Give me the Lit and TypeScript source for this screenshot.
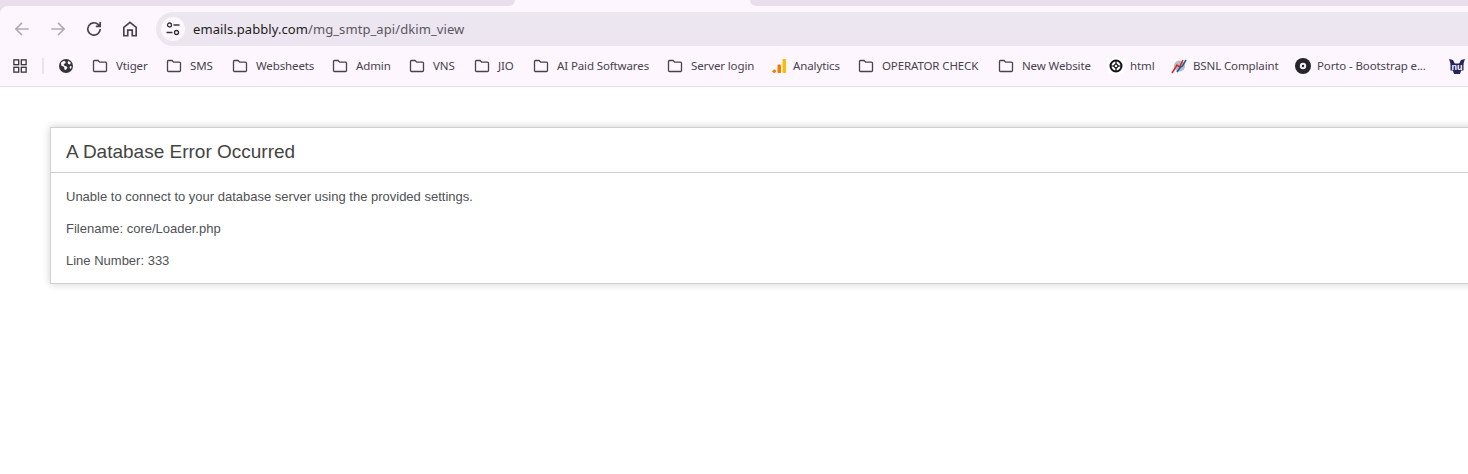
import { LitElement, html, css, svg } from "lit";
import { customElement } from "lit/decorators.js";

type Mark = "folder" | "globe" | "analytics" | "codepen" | "bsnl" | "porto" | "nu";

interface Bookmark {
  label: string;
  icon: Mark;
  left: number; // measured from the reference bar
}

const bookmarks: Bookmark[] = [
  { label: "Vtiger", icon: "folder", left: 92 },
  { label: "SMS", icon: "folder", left: 166 },
  { label: "Websheets", icon: "folder", left: 232 },
  { label: "Admin", icon: "folder", left: 332 },
  { label: "VNS", icon: "folder", left: 409 },
  { label: "JIO", icon: "folder", left: 474 },
  { label: "AI Paid Softwares", icon: "folder", left: 533 },
  { label: "Server login", icon: "folder", left: 667 },
  { label: "Analytics", icon: "analytics", left: 771 },
  { label: "OPERATOR CHECK", icon: "folder", left: 858 },
  { label: "New Website", icon: "folder", left: 998 },
  { label: "html", icon: "codepen", left: 1108 },
  { label: "BSNL Complaint", icon: "bsnl", left: 1171 },
  { label: "Porto - Bootstrap e...", icon: "porto", left: 1295 },
];

const icons: Record<Mark, unknown> = {
  folder: svg`<path d="M1.500 3.500a1 1 0 0 1 1-1h3.600l1.600 1.700h5.800a1 1 0 0 1 1 1v7.300a1 1 0 0 1-1 1H2.500a1 1 0 0 1-1-1z" fill="none" stroke="#47434d" stroke-width="1.300"/>`,
  globe: svg`<circle cx="8" cy="8" r="7" fill="#36343a"/><path d="M3 4.500l3-1.800 1.800 1.200-.6 1.700-1.700.5.900 1.700 2 .4 1 1.500-1.600 2.300-1.400-.6-.3-2.400L3.200 7.500zM10.500 2.800l2.300 2-.6 1.800-2-.5-.6-1.600zM12 8l1.800.5-.9 2.500-1.300-1z" fill="#fdf6fe"/>`,
  analytics: svg`<rect x="1.500" y="11.500" width="3.500" height="3.500" rx="1.700" fill="#f57c00"/><rect x="6.500" y="6.500" width="3.500" height="8.500" rx=".8" fill="#f57c00"/><rect x="11.500" y="1" width="3.500" height="14" rx=".8" fill="#fbbc04"/>`,
  codepen: svg`<rect width="16" height="16" fill="#fff"/><circle cx="8" cy="8" r="5.500" fill="none" stroke="#111" stroke-width="2"/><path d="M8 5.500L10.500 8 8 10.500 5.500 8zM8 2v3.500M8 10.500V14M2 8h3.500M10.500 8H14" fill="none" stroke="#111" stroke-width="1.200"/>`,
  bsnl: svg`<circle cx="8.500" cy="8" r="5.500" fill="#b6bcc2"/><path d="M1 15l5-8 2.500 2L12 2" fill="none" stroke="#e2231a" stroke-width="1.500"/><path d="M6 14l3.500-5 2-1L15 2" fill="none" stroke="#0b5fa5" stroke-width="1.500"/>`,
  porto: svg`<circle cx="8" cy="8" r="8" fill="#26262a"/><circle cx="8" cy="8" r="3.200" fill="#f4f0f4"/><circle cx="8" cy="8" r="1.200" fill="#26262a"/>`,
  nu: svg`<path d="M0 1l4 1 4 8 4-8 4-1-5 15H5z" fill="#26235e"/><rect x="1.500" y="5.500" width="13" height="7" fill="#26235e"/><text x="8" y="11.500" text-anchor="middle" font-family="Liberation Sans" font-size="9" font-weight="700" fill="#fff">nu</text>`,
};

@customElement("app-root")
export class AppRoot extends LitElement {
  static styles = css`
    :host {
      display: block;
      height: 474px;
      overflow: hidden;
      background: #fff;
    }

    .tabs {
      display: flex;
      height: 6px;
      background: #fdf6fe;
    }

    .tabs div {
      background: #e8deec;
    }

    .tabs .before {
      width: 515px;
      border-radius: 0 0 7px 0;
    }

    .tabs .after {
      flex: 1;
      margin-left: 235px;
      border-radius: 0 0 0 7px;
    }

    .chrome {
      background: #e8deec;
    }

    .toolbar {
      display: flex;
      align-items: center;
      box-sizing: border-box;
      height: 40px;
      padding-top: 6px;
      background: #fdf6fe;
      border-radius: 8px 0 0 0;
    }

    .nav {
      width: 36px;
      display: flex;
      justify-content: center;
      flex: none;
    }

    .nav svg {
      width: 18px;
      height: 18px;
      fill: none;
      stroke: #47434d;
      stroke-width: 1.500;
    }

    .nav.off svg {
      stroke: #b0acb5;
    }

    .omnibox {
      flex: 1;
      height: 34px;
      margin-left: 8px;
      border-radius: 17px 0 0 17px;
      background: #ece6f0;
      display: flex;
      align-items: center;
      font: 13px "Noto Sans", sans-serif;
      letter-spacing: 0.08px;
      color: #5a5660;
      overflow: hidden;
    }

    .site {
      width: 24px;
      height: 24px;
      margin: 0 8px 0 5px;
      border-radius: 50%;
      background: #fdf8fe;
      display: flex;
      align-items: center;
      justify-content: center;
    }

    .site svg {
      width: 16px;
      height: 16px;
      fill: none;
      stroke: #36343a;
      stroke-width: 1.300;
    }

    .host {
      color: #1e1c22;
    }

    .bookmarks {
      position: relative;
      height: 40px;
      background: #fdf6fe;
      border-bottom: 1px solid #e6e1e8;
      font: 11.500px "Noto Sans", sans-serif;
      letter-spacing: -0.12px;
      color: #47434d;
    }

    /* bookmark slots are placed at the reference offsets */
    .apps {
      position: absolute;
      left: 13px;
      top: 13px;
      width: 14px;
      height: 14px;
      fill: none;
      stroke: #36343a;
      stroke-width: 1.500;
    }

    .divider {
      position: absolute;
      left: 42px;
      top: 12px;
      width: 2px;
      height: 16px;
      background: #ece0f6;
    }

    .item {
      position: absolute;
      top: 0;
      height: 40px;
      display: flex;
      align-items: center;
      gap: 6px;
      white-space: nowrap;
    }

    .item.folder {
      gap: 8px;
    }

    .item span {
      margin-bottom: 2px;
    }

    .item svg {
      width: 16px;
      height: 16px;
      flex: none;
      display: block;
    }

    main {
      padding: 40px 0 0 50px;
    }

    .card {
      width: 1500px;
      border: 1px solid #d0d0d0;
      box-shadow: 0 0 8px #d0d0d0;
      background: #fff;
      font: 13px/16px "Liberation Sans", Arial, sans-serif;
      color: #4f5155;
    }

    h1 {
      margin: 0;
      padding: 14px 15px 10px;
      border-bottom: 1px solid #d0d0d0;
      font-size: 19px;
      line-height: 20px;
      font-weight: normal;
      color: #444;
    }

    .body {
      padding: 16px 15px 14px;
    }

    p {
      margin: 0 0 16px;
    }

    p:last-child {
      margin-bottom: 0;
    }
  `;

  render() {
    return html`
      <div class="tabs"><div class="before"></div><div class="after"></div></div>
      <div class="chrome">
        <div class="toolbar">
          <div class="nav off" style="margin-left:4px">
            <svg viewBox="0 0 16 16"><path d="M14 8H2.500M8 2.500L2.500 8 8 13.500" /></svg>
          </div>
          <div class="nav off">
            <svg viewBox="0 0 16 16"><path d="M2 8h11.500M8 2.500L13.500 8 8 13.500" /></svg>
          </div>
          <div class="nav">
            <svg viewBox="0 0 16 16"><path d="M13.500 8a5.500 5.500 0 1 1-1.600-3.900L13.500 5.700M13.500 1.800v3.900H9.600" /></svg>
          </div>
          <div class="nav">
            <svg viewBox="0 0 16 16"><path d="M2.500 14V6.500L8 2l5.500 4.500V14h-3.500V9H6v5z" /></svg>
          </div>
          <div class="omnibox">
            <span class="site">
              <svg viewBox="0 0 16 16">
                <circle cx="4.500" cy="4" r="2" />
                <path d="M8.500 4h6M1.500 11.500h6" />
                <circle cx="11.500" cy="11.500" r="2" />
              </svg>
            </span>
            <span><span class="host">emails.pabbly.com</span>/mg_smtp_api/dkim_view</span>
          </div>
        </div>
      </div>
      <div class="bookmarks">
        <svg class="apps" viewBox="0 0 16 16">
          <rect x="1" y="1" width="5.500" height="5.500" />
          <rect x="9.500" y="1" width="5.500" height="5.500" />
          <rect x="1" y="9.500" width="5.500" height="5.500" />
          <rect x="9.500" y="9.500" width="5.500" height="5.500" />
        </svg>
        <div class="divider"></div>
        <div class="item" style="left:58px">
          <svg viewBox="0 0 16 16">${icons.globe}</svg>
        </div>
        ${bookmarks.map(
          (b) => html`
            <div class="item ${b.icon === "folder" ? "folder" : ""}" style="left:${b.left}px">
              <svg viewBox="0 0 16 16">${icons[b.icon]}</svg>
              <span>${b.label}</span>
            </div>
          `,
        )}
        <div class="item" style="left:1449px">
          <svg viewBox="0 0 16 16">${icons.nu}</svg>
        </div>
      </div>
      <main>
        <div class="card">
          <h1>A Database Error Occurred</h1>
          <div class="body">
            <p>Unable to connect to your database server using the provided settings.</p>
            <p>Filename: core/Loader.php</p>
            <p>Line Number: 333</p>
          </div>
        </div>
      </main>
    `;
  }
}
